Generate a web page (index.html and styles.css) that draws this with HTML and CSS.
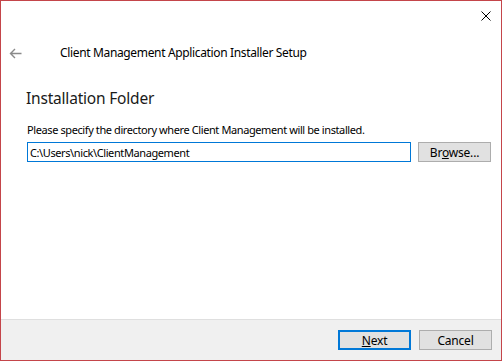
FILE: index.html
```html
<!DOCTYPE html>
<html lang="en">
<head>
  <meta charset="UTF-8" />
  <title>Client Management Application Installer Setup</title>
  <link rel="stylesheet" href="styles.css">
</head>
<body>
  <div class="window">
    <div class="titlebar">
      <span class="close">
        <svg width="10" height="10" viewBox="0 0 10 10">
          <path d="M0.5 0.5 L9.5 9.5 M9.5 0.5 L0.5 9.5" stroke="#000" stroke-width="1" fill="none" />
        </svg>
      </span>
    </div>

    <div class="header">
      <span class="back">
        <svg width="13" height="11" viewBox="0 0 13 11">
          <path d="M12.5 5.5 H1.5 M6 1 L1.5 5.5 L6 10" stroke="#8a8a8a" stroke-width="1.4" fill="none" />
        </svg>
      </span>
      <span class="title">Client Management Application Installer Setup</span>
    </div>

    <div class="content">
      <h1>Installation Folder</h1>
      <p class="hint">Please specify the directory where Client Management will be installed.</p>
      <div class="folder-row">
        <input type="text" class="path" value="C:\Users\nick\ClientManagement" />
        <button class="btn">Br<u>o</u>wse...</button>
      </div>
    </div>

    <div class="footer">
      <button class="btn btn-default"><u>N</u>ext</button>
      <button class="btn">Cancel</button>
    </div>
  </div>
</body>
</html>
```

FILE: styles.css
```css
:root {
  --accent: #0078d7;
  --frame: #c4454a;
  --text: #000;
  --btn-bg: #e1e1e1;
  --btn-border: #adadad;
  --footer-bg: #f0f0f0;
}

* {
  margin: 0;
  padding: 0;
  box-sizing: border-box;
}

body {
  font-family: 'Noto Sans', sans-serif;
  font-size: 12px;
  color: var(--text);
  background: #fff;
}

.window {
  width: 502px;
  height: 361px;
  border: 1px solid var(--frame);
  display: flex;
  flex-direction: column;
  background: #fff;
}

.titlebar {
  height: 29px;
  display: flex;
  justify-content: flex-end;
}

.close {
  width: 30px;
  display: flex;
  align-items: center;
  justify-content: center;
}

.close svg {
  display: block;
}

.header {
  display: flex;
  align-items: center;
  height: 16px;
  margin-top: 15px;
  padding-left: 8px;
}

.back svg {
  display: block;
}

.title {
  margin-left: 38px;
  line-height: 16px;
  letter-spacing: -0.35px;
}

.content {
  padding: 0 10px 0 25px;
}

h1 {
  font-size: 15.5px;
  font-weight: normal;
  line-height: 20px;
  margin-top: 27px;
  color: #1a1a1a;
  letter-spacing: -0.2px;
}

.hint {
  font-size: 11px;
  line-height: 16px;
  margin-top: 14px;
  padding-left: 1px;
  letter-spacing: -0.4px;
}

.folder-row {
  display: flex;
  gap: 7px;
  margin-top: 4px;
  padding-left: 1px;
}

.path {
  width: 384px;
  height: 20px;
  border: 1px solid var(--accent);
  padding: 0 2px;
  font-family: inherit;
  font-size: 11px;
  letter-spacing: -0.4px;
  color: var(--text);
  outline: none;
}

.btn {
  width: 73px;
  height: 20px;
  background: var(--btn-bg);
  border: 1px solid var(--btn-border);
  font-family: inherit;
  font-size: 12px;
  letter-spacing: -0.2px;
  color: var(--text);
}

.btn-default {
  border: 2px solid var(--accent);
}

.footer {
  margin-top: auto;
  height: 41px;
  background: var(--footer-bg);
  border-top: 1px solid #dfdfdf;
  display: flex;
  justify-content: flex-end;
  align-items: center;
  gap: 8px;
  padding-right: 9px;
}
```
